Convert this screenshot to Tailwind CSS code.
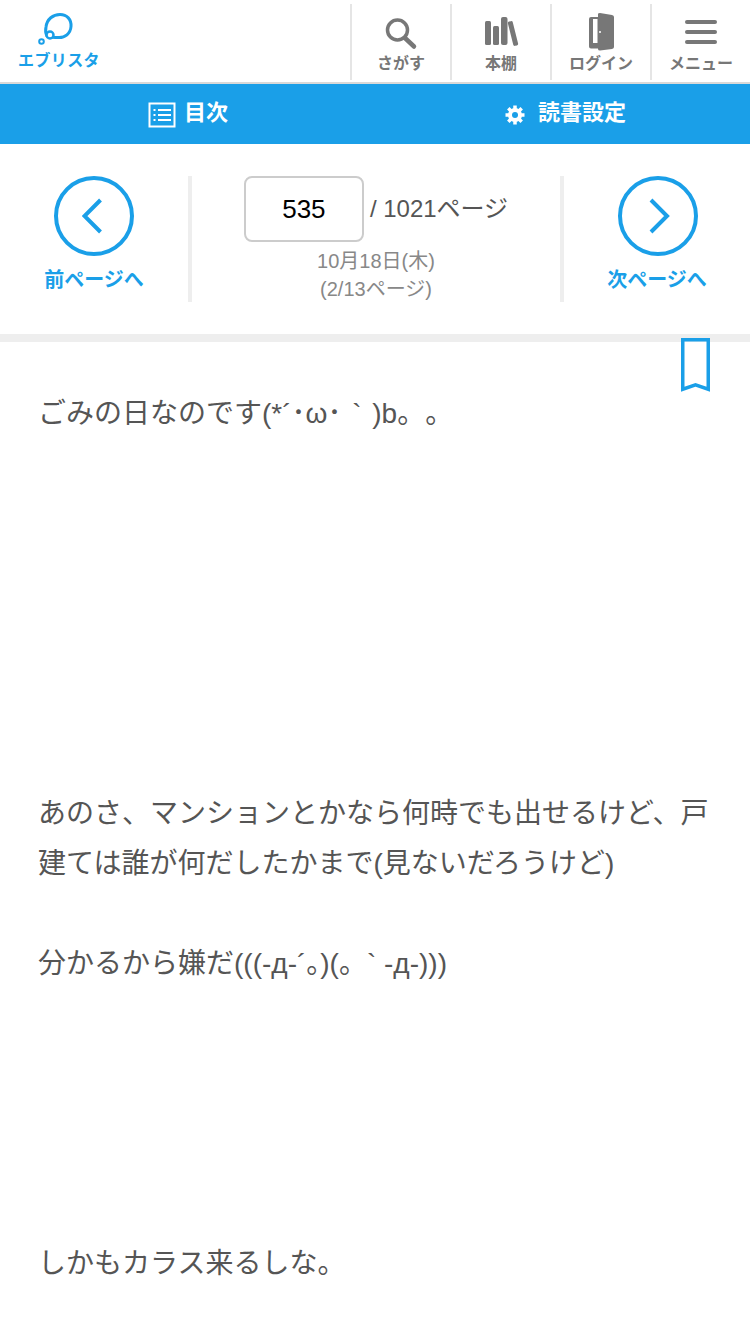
<!DOCTYPE html>
<html lang="ja">
<head>
  <meta charset="UTF-8" />
  <meta name="viewport" content="width=device-width, initial-scale=1" />
  <title>エブリスタ</title>
  <script src="https://cdn.jsdelivr.net/npm/@tailwindcss/browser@4"></script>
</head>
<body class="bg-white font-['Liberation_Sans','Noto_Sans_CJK_JP',sans-serif] w-[750px] h-[1334px] overflow-hidden">
  <!-- header -->
  <header class="flex h-[84px] border-b-2 border-[#d9d9d9]">
    <a class="w-[350px] pl-[18px] pt-[12px] flex flex-col items-start">
      <svg width="82" height="36" viewBox="0 0 82 36" class="block">
        <g fill="none" stroke="#1a9fe8">
          <path d="M29 24c-1-2-2-5-1-9 1-8 7-12.500 14-12.500 7 0 11.500 5 11 12-.5 7-6 11.500-13 11-4-.2-7 .5-11-1.500z" stroke-width="3" />
          <circle cx="32" cy="23" r="3.500" fill="#fff" stroke-width="2.500" />
          <circle cx="23.500" cy="29.500" r="2.300" stroke-width="2" />
        </g>
      </svg>
      <span class="mt-[3px] text-[16px] leading-[20px] font-bold text-[#1a9fe8] tracking-[0.4px]">エブリスタ</span>
    </a>
    <nav class="flex pt-[4px] pb-[2px]">
      <a class="w-[100px] border-l-2 border-[#e5e5e5] flex flex-col items-center text-[#777]">
        <svg width="36" height="36" viewBox="0 0 36 36" class="mt-[10px]">
          <circle cx="14.500" cy="16" r="10" fill="none" stroke="#777" stroke-width="3.500" />
          <path d="M22 24l9 8.500" stroke="#777" stroke-width="4.500" stroke-linecap="round" />
        </svg>
        <span class="mt-[4px] text-[16px] leading-[20px] font-bold">さがす</span>
      </a>
      <a class="w-[100px] border-l-2 border-[#e5e5e5] flex flex-col items-center text-[#777]">
        <svg width="36" height="36" viewBox="0 0 36 36" class="mt-[10px]">
          <rect x="2" y="7" width="6" height="24" rx="1.500" fill="#777" />
          <rect x="10" y="12" width="6" height="19" rx="1.500" fill="#777" />
          <rect x="18" y="3" width="6.500" height="28" rx="2" fill="#777" />
          <rect x="27.500" y="7" width="5" height="25" rx="1.500" fill="#777" transform="rotate(-14 30 19.500)" />
        </svg>
        <span class="mt-[4px] text-[16px] leading-[20px] font-bold">本棚</span>
      </a>
      <a class="w-[100px] border-l-2 border-[#e5e5e5] flex flex-col items-center text-[#777]">
        <svg width="36" height="36" viewBox="0 0 36 36" class="mt-[10px] overflow-visible">
          <path d="M8 3H15V0Q15-1 17-1L29 1Q31 1.500 31 3V33Q31 34.500 29 35L17 36.500Q15 36.500 15 35V34.500H8Q6 34.500 6 32.500V5Q6 3 8 3z" fill="#777" />
          <rect x="10" y="5" width="4.500" height="24" fill="#fff" />
          <circle cx="17" cy="18" r="1" fill="#fff" />
        </svg>
        <span class="mt-[4px] text-[16px] leading-[20px] font-bold">ログイン</span>
      </a>
      <a class="w-[100px] border-l-2 border-[#e5e5e5] flex flex-col items-center text-[#777]">
        <svg width="36" height="36" viewBox="0 0 36 36" class="mt-[10px]">
          <rect x="2" y="6" width="32" height="4" rx="2" fill="#777" />
          <rect x="2" y="16" width="32" height="4" rx="2" fill="#777" />
          <rect x="2" y="26" width="32" height="4" rx="2" fill="#777" />
        </svg>
        <span class="mt-[4px] text-[16px] leading-[20px] font-bold">メニュー</span>
      </a>
    </nav>
  </header>

  <!-- tabs -->
  <div class="flex h-[60px] bg-[#1a9fe8] text-white text-[22px] font-bold">
    <a class="w-[374px] pl-[2px] flex items-center justify-center gap-[8px]">
      <svg width="28" height="26" viewBox="0 0 28 26" class="mt-[2px]">
        <rect x="1.500" y="1.500" width="25" height="23" fill="none" stroke="#fff" stroke-width="2" />
        <path d="M10 8h13M10 13h13M10 18h13M5.500 8h2M5.500 13h2M5.500 18h2" stroke="#fff" stroke-width="2" />
      </svg>
      <span class="leading-[30px] pb-[2px]">目次</span>
    </a>
    <a class="ml-[2px] w-[374px] pl-[5px] flex items-center justify-center gap-[13px]">
      <svg width="20" height="20" viewBox="0 0 20 20" class="mt-[1px]">
        <circle cx="10" cy="10" r="7" fill="#fff" />
        <path d="M10 .5V19.500M.5 10H19.500M3.300 3.300L16.700 16.700M16.700 3.300L3.300 16.700" stroke="#fff" stroke-width="3.500" />
        <circle cx="10" cy="10" r="3" fill="#1a9fe8" />
      </svg>
      <span class="leading-[30px] pb-[2px]">読書設定</span>
    </a>
  </div>

  <!-- pager -->
  <section class="flex h-[198px] pt-[32px] pb-[32px] border-b-8 border-[#eee]">
    <a class="w-[188px] flex flex-col items-center">
      <span class="w-[80px] h-[80px] rounded-full border-4 border-[#1a9fe8] flex items-center justify-center">
        <svg width="24" height="36" viewBox="0 0 24 36"><path d="M18.500 2L2.500 18l16 16" fill="none" stroke="#1a9fe8" stroke-width="4" /></svg>
      </span>
      <span class="mt-[9px] text-[20px] leading-[30px] font-bold text-[#1a9fe8]">前ページへ</span>
    </a>
    <div class="w-[376px] border-x-4 border-[#eee] flex flex-col items-center">
      <div class="flex items-center">
        <div class="w-[120px] h-[66px] rounded-[8px] border-2 border-[#ccc] flex items-center justify-center text-[26px] text-black">535</div>
        <span class="ml-[6px] text-[24px] text-[#555]">/ 1021ページ</span>
      </div>
      <p class="mt-[5px] text-center text-[20px] leading-[28px] text-[#888]">10月18日(木)<br />(2/13ページ)</p>
    </div>
    <a class="w-[186px] pl-[2px] flex flex-col items-center">
      <span class="w-[80px] h-[80px] rounded-full border-4 border-[#1a9fe8] flex items-center justify-center">
        <svg width="24" height="36" viewBox="0 0 24 36"><path d="M5 2l16 16L5 34" fill="none" stroke="#1a9fe8" stroke-width="4" /></svg>
      </span>
      <span class="mt-[9px] ml-[-2px] text-[20px] leading-[30px] font-bold text-[#1a9fe8]">次ページへ</span>
    </a>
  </section>

  <!-- body text -->
  <main class="relative px-[38px] pt-[47px] text-[28px] leading-[50px] text-[#555]">
    <svg width="29" height="54" viewBox="0 0 29 54" class="absolute right-[40px] top-[-4px]">
      <path d="M1.750 1.750h25.500v49.500l-12.750-4.500-12.750 4.500z" fill="none" stroke="#1a9fe8" stroke-width="3.500" />
    </svg>
    <p><span class="[text-spacing-trim:space-all] [word-spacing:3px]">ごみの日なのです(*´･ω･ ` )b。。</span><br /><br /><br /><br /><br /><br /><br /><br />あのさ、マンションとかなら何時でも出せるけど、戸建ては誰が何だしたかまで(見ないだろうけど)<br /><br />分かるから嫌だ(((-д-´。)(。` -д-)))<br /><br /><br /><br /><br /><br />しかもカラス来るしな。</p>
  </main>
</body>
</html>
